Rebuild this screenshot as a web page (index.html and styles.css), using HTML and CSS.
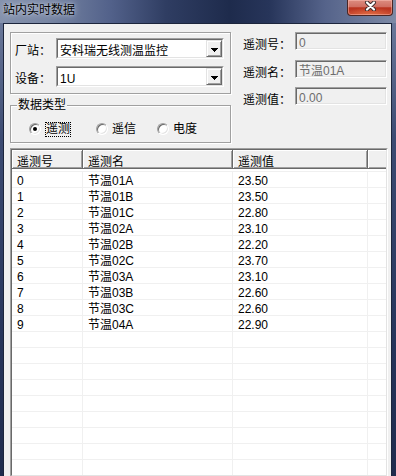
FILE: index.html
```html
<!DOCTYPE html>
<html lang="zh-CN">
<head>
<meta charset="utf-8">
<title>站内实时数据</title>
<link rel="stylesheet" href="styles.css">
</head>
<body>
<div class="window">
  <div class="titlebar">
    <span class="title">站内实时数据</span>
    <div class="close">
      <svg width="13" height="10" viewBox="0 0 13 10">
        <path d="M3 1.5 L10 8.5 M10 1.5 L3 8.5" stroke="#3a2a2a" stroke-width="4" stroke-linecap="round" fill="none"/>
        <path d="M3 1.5 L10 8.5 M10 1.5 L3 8.5" stroke="#ffffff" stroke-width="2.2" stroke-linecap="round" fill="none"/>
      </svg>
    </div>
  </div>
  <div class="frame">
    <div class="client">
      <div class="top">
        <div class="left-col">
          <div class="group station">
            <div class="field-row">
              <span class="lbl">厂站：</span>
              <div class="combo">
                <div class="combo-inner">
                  <span class="combo-text">安科瑞无线测温监控</span>
                  <span class="combo-btn"><svg class="arrow" width="7" height="4" viewBox="0 0 7 4"><path d="M0 0h7v1h-1v1h-1v1h-1v1h-1v-1h-1v-1h-1v-1h-1z" fill="#000"/></svg></span>
                </div>
              </div>
            </div>
            <div class="field-row">
              <span class="lbl">设备：</span>
              <div class="combo">
                <div class="combo-inner">
                  <span class="combo-text">1U</span>
                  <span class="combo-btn"><svg class="arrow" width="7" height="4" viewBox="0 0 7 4"><path d="M0 0h7v1h-1v1h-1v1h-1v1h-1v-1h-1v-1h-1v-1h-1z" fill="#000"/></svg></span>
                </div>
              </div>
            </div>
          </div>
          <fieldset class="group types">
            <legend>数据类型</legend>
            <div class="radio-row">
              <span class="radio-item ri1"><span class="radio checked"></span><span class="radio-text focus">遥测</span></span>
              <span class="radio-item ri2"><span class="radio"></span><span class="radio-text">遥信</span></span>
              <span class="radio-item ri3"><span class="radio"></span><span class="radio-text">电度</span></span>
            </div>
          </fieldset>
        </div>
        <div class="right-col">
          <div class="info-row"><span class="info-lbl">遥测号：</span><div class="textbox">0</div></div>
          <div class="info-row r2"><span class="info-lbl">遥测名：</span><div class="textbox">节温01A</div></div>
          <div class="info-row r3"><span class="info-lbl">遥测值：</span><div class="textbox">0.00</div></div>
        </div>
      </div>
      <div class="list">
        <div class="list-inner">
          <div class="list-head">
            <div class="hcell c1">遥测号</div>
            <div class="hcell c2">遥测名</div>
            <div class="hcell c3">遥测值</div>
            <div class="hcell c4"></div>
          </div>
          <div class="list-body">
            <div class="row"><div class="cell c1">0</div><div class="cell c2">节温01A</div><div class="cell c3">23.50</div><div class="cell c4"></div></div>
            <div class="row"><div class="cell c1">1</div><div class="cell c2">节温01B</div><div class="cell c3">23.50</div><div class="cell c4"></div></div>
            <div class="row"><div class="cell c1">2</div><div class="cell c2">节温01C</div><div class="cell c3">22.80</div><div class="cell c4"></div></div>
            <div class="row"><div class="cell c1">3</div><div class="cell c2">节温02A</div><div class="cell c3">23.10</div><div class="cell c4"></div></div>
            <div class="row"><div class="cell c1">4</div><div class="cell c2">节温02B</div><div class="cell c3">22.20</div><div class="cell c4"></div></div>
            <div class="row"><div class="cell c1">5</div><div class="cell c2">节温02C</div><div class="cell c3">23.70</div><div class="cell c4"></div></div>
            <div class="row"><div class="cell c1">6</div><div class="cell c2">节温03A</div><div class="cell c3">23.10</div><div class="cell c4"></div></div>
            <div class="row"><div class="cell c1">7</div><div class="cell c2">节温03B</div><div class="cell c3">22.60</div><div class="cell c4"></div></div>
            <div class="row"><div class="cell c1">8</div><div class="cell c2">节温03C</div><div class="cell c3">22.60</div><div class="cell c4"></div></div>
            <div class="row"><div class="cell c1">9</div><div class="cell c2">节温04A</div><div class="cell c3">22.90</div><div class="cell c4"></div></div>
            <div class="row"><div class="cell c1"></div><div class="cell c2"></div><div class="cell c3"></div><div class="cell c4"></div></div>
            <div class="row"><div class="cell c1"></div><div class="cell c2"></div><div class="cell c3"></div><div class="cell c4"></div></div>
            <div class="row"><div class="cell c1"></div><div class="cell c2"></div><div class="cell c3"></div><div class="cell c4"></div></div>
            <div class="row"><div class="cell c1"></div><div class="cell c2"></div><div class="cell c3"></div><div class="cell c4"></div></div>
            <div class="row"><div class="cell c1"></div><div class="cell c2"></div><div class="cell c3"></div><div class="cell c4"></div></div>
            <div class="row"><div class="cell c1"></div><div class="cell c2"></div><div class="cell c3"></div><div class="cell c4"></div></div>
            <div class="row"><div class="cell c1"></div><div class="cell c2"></div><div class="cell c3"></div><div class="cell c4"></div></div>
            <div class="row"><div class="cell c1"></div><div class="cell c2"></div><div class="cell c3"></div><div class="cell c4"></div></div>
            <div class="row"><div class="cell c1"></div><div class="cell c2"></div><div class="cell c3"></div><div class="cell c4"></div></div>
          </div>
        </div>
      </div>
    </div>
  </div>
</div>
</body>
</html>
```
FILE: styles.css
```css
* { box-sizing: border-box; }
html, body { margin: 0; padding: 0; }
body {
  width: 396px;
  height: 476px;
  overflow: hidden;
  font-family: "Liberation Sans", "Noto Sans CJK SC", sans-serif;
  font-size: 12px;
  color: #000;
  background: #1f2b48;
}
.window {
  width: 396px;
  height: 476px;
  display: flex;
  flex-direction: column;
}
.titlebar {
  height: 23px;
  flex: none;
  display: flex;
  justify-content: space-between;
  align-items: flex-start;
  background: linear-gradient(90deg, #8592ad 0%, #7886a3 12%, #52618a 28%, #2f3d62 42%, #1e2b4c 58%, #27355a 68%, #55638a 82%, #7d8aa6 100%);
}
.title {
  padding: 4px 0 0 3px;
  line-height: 12px;
  color: #000;
  text-shadow: 0 0 6px rgba(225, 232, 245, 0.9), 0 0 2px rgba(225, 232, 245, 0.6);
}
.close {
  width: 46px;
  height: 16px;
  margin-right: 3px;
  border: 1px solid #4a2624;
  border-top: none;
  border-radius: 0 0 4px 4px;
  display: flex;
  justify-content: center;
  align-items: flex-start;
  padding-top: 1px;
  background:
    radial-gradient(ellipse 60% 50% at 50% 100%, rgba(240, 130, 80, 0.7), rgba(240, 130, 80, 0) 100%),
    linear-gradient(180deg, #dc8c80 0%, #d06f62 45%, #b9331f 52%, #c2412b 100%);
  box-shadow: inset 0 0 0 1px rgba(255, 200, 190, 0.45);
}
.frame {
  flex: 1;
  display: flex;
  padding: 0 4px 5px 3px;
  background: linear-gradient(180deg, #6a789a 0%, #3c4b72 25%, #26345a 70%, #1f2b4c 100%);
}
.client {
  flex: 1;
  display: flex;
  flex-direction: column;
  background: #f0f0f0;
  border: 1px solid #1c253c;
  padding: 8px 3px 3px 6px;
}
.top {
  display: flex;
  align-items: flex-start;
  flex: none;
}
.left-col {
  width: 221px;
  display: flex;
  flex-direction: column;
}
.group {
  border: 1px solid #a0a0a0;
  box-shadow: inset 1px 1px 0 #fff, 1px 1px 0 #fff;
}
.station {
  height: 62px;
  padding: 5px 5px 6px 4px;
}
.field-row {
  display: flex;
  align-items: flex-start;
}
.field-row + .field-row { margin-top: 7px; }
.lbl {
  width: 41px;
  padding-top: 7px;
  line-height: 12px;
  white-space: nowrap;
}
.combo {
  width: 168px;
  height: 21px;
  display: flex;
  border: 1px solid;
  border-color: #a0a0a0 #fff #fff #a0a0a0;
}
.combo-inner {
  flex: 1;
  display: flex;
  border: 1px solid;
  border-color: #696969 #e3e3e3 #e3e3e3 #696969;
  background: #fff;
}
.combo-text {
  flex: 1;
  padding: 5px 0 0 2px;
  line-height: 12px;
  white-space: nowrap;
  overflow: hidden;
}
.combo-btn {
  width: 16px;
  display: flex;
  align-items: center;
  justify-content: center;
  background: #f0f0f0;
  border: 1px solid;
  border-color: #e3e3e3 #696969 #696969 #e3e3e3;
  box-shadow: inset 1px 1px 0 #fff, inset -1px -1px 0 #a0a0a0;
}
.arrow {
  display: block;
  margin: 2px 0 0 1px;
}
.types {
  margin: 4px 0 0 0;
  padding: 9px 0 5px 6px;
  min-width: 0;
  width: 221px;
}
.types legend {
  padding: 0 1px;
  margin: 0;
  line-height: 14px;
  background: #f0f0f0;
}
.radio-row {
  display: flex;
  align-items: center;
  height: 16px;
  margin-left: 12px;
}
.radio-item {
  display: flex;
  align-items: center;
}
.ri2 { margin-left: 25px; }
.ri3 { margin-left: 21px; }
.radio {
  width: 12px;
  height: 12px;
  border-radius: 50%;
  background: #fff;
  border: 1px solid;
  border-color: #a0a0a0 #ffffff #ffffff #a0a0a0;
  box-shadow: inset 1px 1px 0 #696969, inset -1px -1px 0 #e3e3e3;
  display: flex;
  align-items: center;
  justify-content: center;
}
.radio.checked::after {
  content: "";
  width: 4px;
  height: 4px;
  border-radius: 50%;
  background: #000;
}
.radio-text {
  margin-left: 4px;
  line-height: 13px;
  white-space: nowrap;
}
.radio-text.focus {
  border: 1px dotted #000;
}
.right-col {
  margin-left: 12px;
  flex: 1;
}
.info-row {
  display: flex;
  align-items: flex-start;
}
.info-row.r2 { margin-top: 9px; }
.info-row.r3 { margin-top: 8px; }
.info-lbl {
  width: 52px;
  padding-top: 7px;
  line-height: 12px;
  white-space: nowrap;
}
.textbox {
  width: 92px;
  height: 18px;
  border: 1px solid;
  border-color: #a0a0a0 #fff #fff #a0a0a0;
  box-shadow: inset 1px 1px 0 #696969, inset -1px -1px 0 #e3e3e3;
  background: #f0f0f0;
  color: #6d6d6d;
  padding: 4px 0 0 3px;
  line-height: 12px;
  white-space: nowrap;
}
.list {
  margin-top: 5px;
  flex: 1;
  min-height: 0;
  display: flex;
  border: 1px solid;
  border-color: #a0a0a0 #fff #fff #a0a0a0;
}
.list-inner {
  flex: 1;
  display: flex;
  flex-direction: column;
  border: 1px solid;
  border-color: #696969 #e3e3e3 #e3e3e3 #696969;
  background: #fff;
  overflow: hidden;
}
.list-head {
  display: flex;
  height: 19px;
  flex: none;
}
.hcell {
  background: #f0f0f0;
  border-right: 1px solid #696969;
  border-bottom: 1px solid #696969;
  box-shadow: inset 1px 1px 0 #fff, inset -1px -1px 0 #a0a0a0;
  padding: 6px 0 0 5px;
  line-height: 12px;
  white-space: nowrap;
}
.hcell.c4 {
  border-right: none;
  box-shadow: inset 1px 1px 0 #fff, inset 0 -1px 0 #a0a0a0;
}
.list-body {
  flex: 1;
  padding-top: 2px;
  overflow: hidden;
}
.row {
  display: flex;
  height: 16px;
  border-top: 1px solid #f0f0f0;
}
.cell {
  padding: 3px 0 0 5px;
  line-height: 12px;
  border-right: 1px solid #f0f0f0;
  white-space: nowrap;
}
.c1 { width: 71px; flex: none; }
.c2 { width: 150px; flex: none; }
.c3 { width: 135px; flex: none; }
.c4 { flex: 1; }
.cell.c4 { border-right: none; }
```
